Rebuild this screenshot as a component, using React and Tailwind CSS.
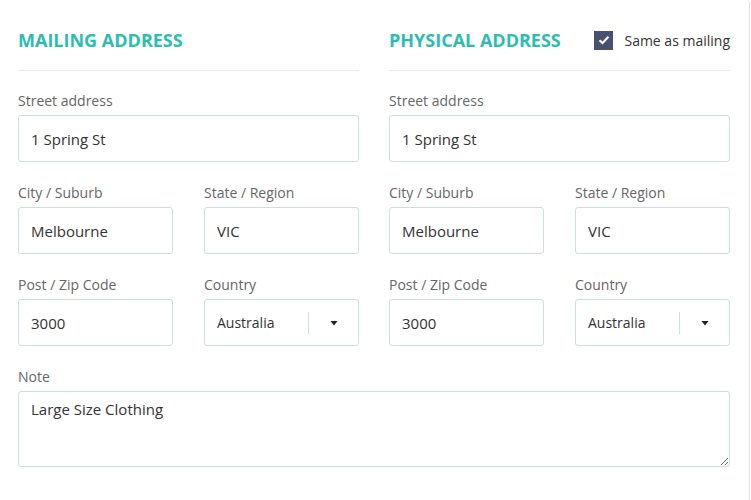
import { useState } from 'react';

const inputCls =
  'w-full h-[47px] px-[12px] border border-[#cddedb] rounded-[3px] bg-white text-[15px] text-[#333] outline-none';

function Field({ label, value, className = '' }) {
  return (
    <div className={className}>
      <label className="block h-5 leading-5 text-[14px] text-[#666] mb-1">{label}</label>
      <input className={inputCls} defaultValue={value} />
    </div>
  );
}

function CountrySelect({ value }) {
  return (
    <div>
      <label className="block h-5 leading-5 text-[14px] text-[#666] mb-1">Country</label>
      <div className="flex h-[47px] items-center border border-[#cddedb] rounded-[3px] bg-white">
        <span className="flex-1 pl-[12px] text-[14px] text-[#333]">{value}</span>
        <div className="flex h-[22px] w-[50px] items-center justify-center border-l border-[#cddedb]">
          <svg width="8" height="6" viewBox="0 0 8 6">
            <path d="M0.5 1 L7.5 1 L4 5.5 Z" fill="#222" />
          </svg>
        </div>
      </div>
    </div>
  );
}

function AddressBlock({ title, right }) {
  return (
    <div className="flex-1">
      <div className="flex h-10 items-center justify-between">
        <h2 className="text-[18px] font-bold text-[#2cbdb1]">{title}</h2>
        {right}
      </div>
      <div className="mt-[10px] h-px bg-[#e8eceb]" />
      <div className="mt-5 flex flex-col gap-[21px]">
        <Field label="Street address" value="1 Spring St" />
        <div className="grid grid-cols-2 gap-[31px]">
          <Field label="City / Suburb" value="Melbourne" />
          <Field label="State / Region" value="VIC" />
        </div>
        <div className="grid grid-cols-2 gap-[31px]">
          <Field label="Post / Zip Code" value="3000" />
          <CountrySelect value="Australia" />
        </div>
      </div>
    </div>
  );
}

export default function App() {
  const [same, setSame] = useState(true);

  return (
    <div
      className="w-[750px] h-[500px] bg-white border-r border-[#e4e6e6] rounded-tr-[4px]"
      style={{ fontFamily: '"Open Sans", sans-serif' }}
    >
      <div className="pl-[18px] pr-[19px] pt-5">
        <div className="flex gap-[30px]">
          <AddressBlock title="MAILING ADDRESS" />
          <AddressBlock
            title="PHYSICAL ADDRESS"
            right={
              <label className="flex items-center gap-[11px] cursor-pointer" onClick={() => setSame(!same)}>
                <span className="flex h-[19px] w-[19px] items-center justify-center bg-[#48516f]">
                  {same && (
                    <svg width="12" height="10" viewBox="0 0 12 10">
                      <path d="M1.5 5.2 L4.5 8 L10.5 1.8" stroke="#fff" strokeWidth="2" fill="none" />
                    </svg>
                  )}
                </span>
                <span className="text-[14px] text-[#333]">Same as mailing</span>
              </label>
            }
          />
        </div>
        <div className="mt-[21px]">
          <label className="block h-5 leading-5 text-[14px] text-[#666] mb-1">Note</label>
          <textarea
            className="block w-full h-[76px] px-[12px] py-[6px] border border-[#cddedb] rounded-[3px] text-[15px] text-[#333] outline-none"
            defaultValue="Large Size Clothing"
          />
        </div>
      </div>
    </div>
  );
}
